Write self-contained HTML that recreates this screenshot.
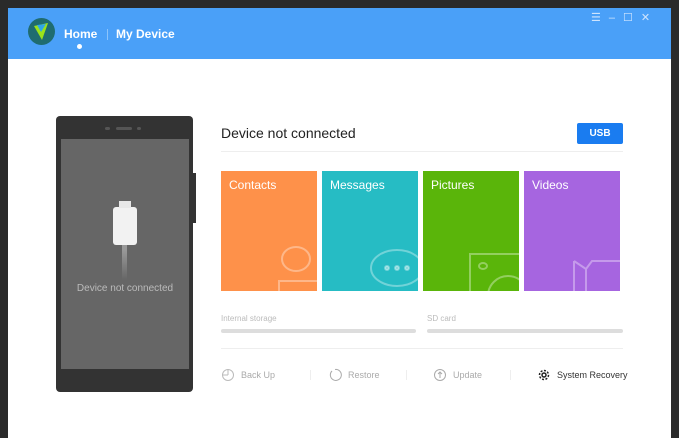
<!DOCTYPE html><html><head><style>
*{margin:0;padding:0;box-sizing:border-box}
body{width:679px;height:429px;background:#2a2a2a;font-family:"Liberation Sans",sans-serif;position:relative;overflow:hidden}
.win{position:absolute;left:8px;top:8px;width:663px;height:430px;background:#fff}
.hdr{position:absolute;left:0;top:0;width:663px;height:51px;background:#4aa0f8}
.a{position:absolute}
.tile{position:absolute;top:163px;width:96px;height:120px;color:#fff;font-size:12px;padding:7px 8px;overflow:hidden}
.lbl{position:absolute;font-size:8px;color:#bbb}
.bar{position:absolute;height:4px;border-radius:2px;background:#ddd}
.act{position:absolute;top:362px;font-size:9px;color:#aaa}
</style></head><body>
<div class="win">
<div class="hdr">
<div class="a" style="left:20px;top:10px;width:27px;height:27px;border-radius:50%;background:#1f6c70"></div>
<svg class="a" style="left:20px;top:10px" width="27" height="27"><polygon points="6,8 20,5 14,22" fill="#9be21a"/><polygon points="9,7 18,6 13,14" fill="#2fa6e8"/></svg>
<div class="a" style="left:56px;top:19px;color:#fff;font-weight:bold;font-size:12px">Home</div>
<div class="a" style="left:69px;top:36px;width:5px;height:5px;border-radius:50%;background:#fff"></div>
<div class="a" style="left:99px;top:21px;width:1px;height:11px;background:#8cc4fb"></div>
<div class="a" style="left:108px;top:19px;color:#fff;font-weight:bold;font-size:12px">My Device</div>
<div class="a" style="left:583px;top:3px;color:#cfe4fd;font-size:11px;letter-spacing:8px">☰–☐✕</div>
</div>
<!-- phone -->
<div class="a" style="left:48px;top:108px;width:137px;height:276px;background:#333;border-radius:4px"></div>
<div class="a" style="left:185px;top:165px;width:3px;height:50px;background:#333"></div>
<div class="a" style="left:97px;top:119px;width:5px;height:3px;border-radius:2px;background:#555"></div>
<div class="a" style="left:108px;top:119px;width:16px;height:3px;border-radius:2px;background:#555"></div>
<div class="a" style="left:129px;top:119px;width:4px;height:3px;border-radius:2px;background:#555"></div>
<div class="a" style="left:53px;top:131px;width:128px;height:230px;background:#666"></div>
<div class="a" style="left:105px;top:199px;width:24px;height:38px;border-radius:3px;background:#f2f2f2"></div>
<div class="a" style="left:111px;top:193px;width:12px;height:7px;background:#e8e8e8"></div>
<div class="a" style="left:114px;top:237px;width:5px;height:5px;background:#999"></div>
<div class="a" style="left:114px;top:242px;width:5px;height:30px;background:linear-gradient(#999,#666)"></div>
<div class="a" style="left:53px;top:275px;width:128px;text-align:center;font-size:10px;color:#bbb">Device not connected</div>
<!-- right -->
<div class="a" style="left:213px;top:117px;font-size:14px;color:#222">Device not connected</div>
<div class="a" style="left:569px;top:115px;width:46px;height:21px;background:#1a7cf0;border-radius:2px;color:#fff;font-size:10px;font-weight:bold;text-align:center;line-height:21px">USB</div>
<div class="a" style="left:213px;top:143px;width:402px;height:1px;background:#eee"></div>
<div class="tile" style="left:213px;background:#fe914a">Contacts
<svg class="a" style="left:50px;top:70px" width="50" height="55" fill="none" stroke="rgba(255,255,255,.35)" stroke-width="2"><ellipse cx="25" cy="18" rx="14" ry="12"/><rect x="8" y="40" width="50" height="20"/></svg></div>
<div class="tile" style="left:314px;background:#26bcc4">Messages
<svg class="a" style="left:45px;top:75px" width="55" height="50" fill="none" stroke="rgba(255,255,255,.35)" stroke-width="2"><ellipse cx="30" cy="22" rx="26" ry="18"/><circle cx="20" cy="22" r="2" fill="rgba(255,255,255,.4)"/><circle cx="30" cy="22" r="2" fill="rgba(255,255,255,.4)"/><circle cx="40" cy="22" r="2" fill="rgba(255,255,255,.4)"/></svg></div>
<div class="tile" style="left:415px;background:#5ab50a">Pictures
<svg class="a" style="left:45px;top:80px" width="55" height="45" fill="none" stroke="rgba(255,255,255,.35)" stroke-width="2"><rect x="2" y="3" width="60" height="50"/><ellipse cx="15" cy="15" rx="4" ry="3"/><circle cx="40" cy="45" r="20"/></svg></div>
<div class="tile" style="left:516px;background:#a665e0">Videos
<svg class="a" style="left:48px;top:80px" width="50" height="45" fill="none" stroke="rgba(255,255,255,.35)" stroke-width="2"><path d="M2 10 L14 18 L20 10 L60 10 M2 10 V40 M14 18 V40"/></svg></div>
<div class="lbl" style="left:213px;top:306px">Internal storage</div>
<div class="lbl" style="left:419px;top:306px">SD card</div>
<div class="bar" style="left:213px;top:321px;width:195px"></div>
<div class="bar" style="left:419px;top:321px;width:196px"></div>
<div class="a" style="left:213px;top:340px;width:402px;height:1px;background:#eee"></div>
<svg class="a" style="left:213px;top:360px" width="14" height="14" fill="none" stroke="#bbb"><circle cx="7" cy="7" r="5.5"/><path d="M7 7V2M7 7H2"/></svg>
<div class="act" style="left:233px">Back Up</div>
<div class="a" style="left:302px;top:362px;width:1px;height:10px;background:#eee"></div>
<svg class="a" style="left:320px;top:360px" width="14" height="14" fill="none" stroke="#aaa"><path d="M4 3A5.5 5.5 0 1 0 7 1.5"/></svg>
<div class="act" style="left:340px">Restore</div>
<div class="a" style="left:398px;top:362px;width:1px;height:10px;background:#eee"></div>
<svg class="a" style="left:425px;top:360px" width="14" height="14" fill="none" stroke="#aaa"><circle cx="7" cy="7" r="5.5"/><path d="M7 10V4M5 6l2-2 2 2"/></svg>
<div class="act" style="left:445px">Update</div>
<div class="a" style="left:502px;top:362px;width:1px;height:10px;background:#eee"></div>
<svg class="a" style="left:529px;top:360px" width="14" height="14" fill="none" stroke="#222" stroke-width="1.5"><circle cx="7" cy="7" r="4.5" stroke-dasharray="2 1.5"/><circle cx="7" cy="7" r="2"/></svg>
<div class="act" style="left:549px;color:#333">System Recovery</div>
</div>
</body></html>
